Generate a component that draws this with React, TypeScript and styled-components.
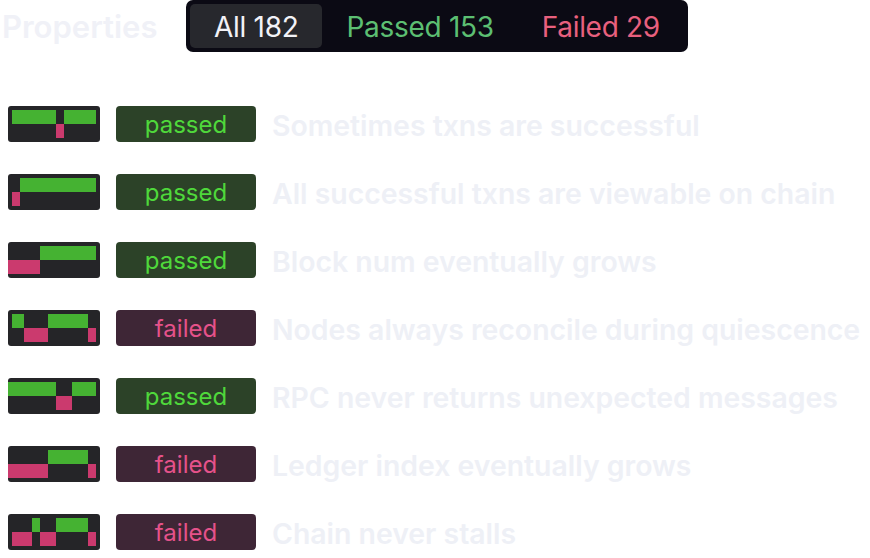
import React, { useState } from "react";
import styled, { createGlobalStyle } from "styled-components";

type Segment = [number, number];

type Property = {
  name: string;
  passed: boolean;
  top: Segment[];
  bottom: Segment[];
};

const properties: Property[] = [
  { name: "Sometimes txns are successful", passed: true, top: [[4, 48], [56, 88]], bottom: [[48, 56]] },
  { name: "All successful txns are viewable on chain", passed: true, top: [[12, 88]], bottom: [[4, 12]] },
  { name: "Block num eventually grows", passed: true, top: [[32, 88]], bottom: [[0, 32]] },
  { name: "Nodes always reconcile during quiescence", passed: false, top: [[4, 16], [40, 80]], bottom: [[16, 40], [80, 88]] },
  { name: "RPC never returns unexpected messages", passed: true, top: [[0, 48], [64, 88]], bottom: [[48, 64]] },
  { name: "Ledger index eventually grows", passed: false, top: [[40, 80]], bottom: [[0, 40], [80, 88]] },
  { name: "Chain never stalls", passed: false, top: [[24, 32], [48, 80]], bottom: [[4, 24], [32, 48], [80, 88]] },
];

const GlobalStyle = createGlobalStyle`
  html, body {
    margin: 0;
    padding: 0;
    background: #ffffff;
    font-family: Inter, "Noto Sans", sans-serif;
  }
`;

const Timeline: React.FC<{ top: Segment[]; bottom: Segment[] }> = ({ top, bottom }) => (
  <Bar width="92" height="36" viewBox="0 0 92 36">
    <rect x="0" y="0" width="92" height="36" rx="3" fill="#252528" />
    {top.map(([a, b], i) => (
      <rect key={"t" + i} x={a} y="4" width={b - a} height="14" fill="#45b232" />
    ))}
    {bottom.map(([a, b], i) => (
      <rect key={"b" + i} x={a} y="18" width={b - a} height="14" fill="#cb3a6e" />
    ))}
  </Bar>
);

const App: React.FC = () => {
  const [tab, setTab] = useState("all");
  const passedCount = 153;
  const failedCount = 29;

  return (
    <Page>
      <GlobalStyle />
      <Header>
        <Title>Properties</Title>
        <Tabs>
          <Tab active={tab === "all"} tone="all" onClick={() => setTab("all")}>
            All {passedCount + failedCount}
          </Tab>
          <Tab active={tab === "passed"} tone="passed" onClick={() => setTab("passed")}>
            Passed {passedCount}
          </Tab>
          <Tab active={tab === "failed"} tone="failed" onClick={() => setTab("failed")}>
            Failed {failedCount}
          </Tab>
        </Tabs>
      </Header>
      <List>
        {properties.map((p) => (
          <Row key={p.name}>
            <Timeline top={p.top} bottom={p.bottom} />
            <Badge passed={p.passed}>{p.passed ? "passed" : "failed"}</Badge>
            <Label>{p.name}</Label>
          </Row>
        ))}
      </List>
    </Page>
  );
};

const Page = styled.div`
  width: 870px;
  height: 558px;
  overflow: hidden;
`;

const Header = styled.div`
  display: flex;
  align-items: center;
  height: 52px;
  padding-left: 2px;
`;

const Title = styled.h1`
  margin: 0;
  width: 184px;
  font-size: 31px;
  font-weight: 600;
  color: #f0f1f7;
`;

const Tabs = styled.div`
  display: flex;
  align-items: center;
  height: 52px;
  padding: 4px;
  box-sizing: border-box;
  background: #0b0a14;
  border-radius: 7px;
`;

const toneColor = {
  all: "#f2f2f7",
  passed: "#5cbf72",
  failed: "#e8607e",
};

const Tab = styled.button<{ active: boolean; tone: "all" | "passed" | "failed" }>`
  height: 44px;
  padding: 2px 24px 0;
  border: none;
  border-radius: 5px;
  background: ${(p) => (p.active ? "#27282d" : "transparent")};
  color: ${(p) => toneColor[p.tone]};
  font-family: Inter, "Noto Sans", sans-serif;
  font-size: 28px;
  font-weight: 400;
  letter-spacing: -0.3px;
  cursor: pointer;
`;

const List = styled.div`
  display: flex;
  flex-direction: column;
  gap: 32px;
  margin-top: 54px;
  padding-left: 8px;
`;

const Row = styled.div`
  display: flex;
  align-items: center;
  gap: 16px;
  height: 36px;
`;

const Bar = styled.svg`
  display: block;
  flex-shrink: 0;
`;

const Badge = styled.div<{ passed: boolean }>`
  display: flex;
  align-items: center;
  justify-content: center;
  width: 140px;
  height: 36px;
  flex-shrink: 0;
  border-radius: 4px;
  background: ${(p) => (p.passed ? "#2c4228" : "#3e2636")};
  color: ${(p) => (p.passed ? "#4fd83b" : "#e5528a")};
  font-size: 24px;
  font-weight: 400;
`;

const Label = styled.div`
  padding-top: 3px;
  font-size: 28.4px;
  font-weight: 600;
  color: #eef0f6;
  white-space: nowrap;
`;

export default App;
